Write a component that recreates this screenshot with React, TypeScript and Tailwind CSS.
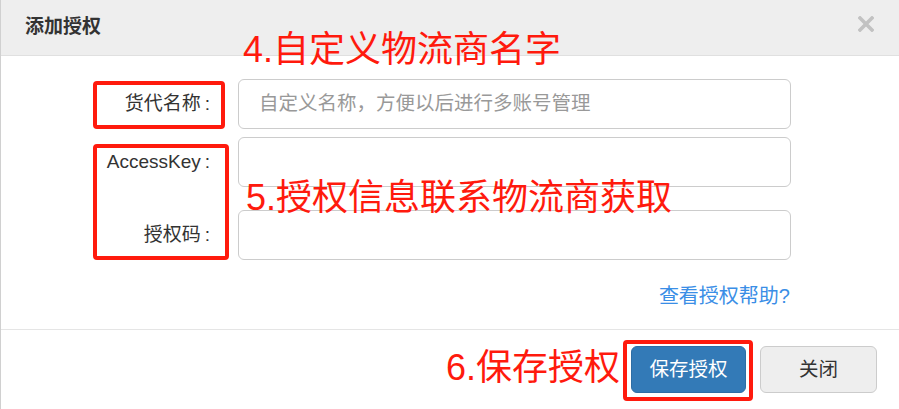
import React from 'react'

const font = { fontFamily: '"Liberation Sans", "Noto Sans CJK SC", sans-serif' }

const Field = ({ label, placeholder, className }: { label: string; placeholder?: string; className?: string }) => (
    <div className={`flex items-center ${className ?? ''}`}>
        <label className="w-[209px] text-right text-[19px] text-[#333]">
            {label}
            <span className="ml-[4px]">:</span>
        </label>
        <div className="ml-[28px] w-[553px] h-[50px] border border-[#cccccc] rounded-[6px] flex items-center px-[20px]">
            <span className="text-[19.5px] text-[#999]">{placeholder}</span>
        </div>
    </div>
)

const App = () => {
    return (
        <div className="relative w-[899px] h-[409px] bg-white overflow-hidden border-l border-[#d0d0d0]" style={font}>
            {/* header */}
            <div className="h-[56px] bg-[#eeeeee] border-b border-[#e0e0e0] flex items-center justify-between pl-[24px] pr-[25px]">
                <h4 className="text-[19px] font-bold text-[#333]">添加授权</h4>
                <svg width="16" height="16" viewBox="0 0 16 16" className="-mt-[8px]">
                    <path d="M2 2L14 14M14 2L2 14" stroke="#c2c2c2" strokeWidth="3.6" strokeLinecap="square" />
                </svg>
            </div>

            {/* body */}
            <div className="pt-[23px] h-[273px]">
                <Field label="货代名称" placeholder="自定义名称，方便以后进行多账号管理" />
                <Field label="AccessKey" className="mt-[8px]" />
                <Field label="授权码" className="mt-[23px]" />
                <div className="flex justify-end pr-[109px] mt-[21px]">
                    <a className="text-[20px] text-[#3a8ee6] cursor-pointer">查看授权帮助?</a>
                </div>
            </div>

            {/* footer */}
            <div className="border-t border-[#e5e5e5] flex justify-end items-center gap-[14px] pr-[22px] pt-[16px]">
                <button className="w-[115px] h-[47px] rounded-[6px] bg-[#337ab7] border border-[#2e6da4] text-white text-[19.5px]">保存授权</button>
                <button className="w-[117px] h-[47px] rounded-[6px] bg-[#eeeeee] border border-[#cccccc] text-[#333] text-[19.5px]">关闭</button>
            </div>

            {/* annotations */}
            <div className="absolute left-[92px] top-[81px] w-[132px] h-[48px] border-[4px] border-[#ff1a0d] rounded-[4px]" />
            <div className="absolute left-[92px] top-[144px] w-[136px] h-[116px] border-[4px] border-[#ff1a0d] rounded-[4px]" />
            <div className="absolute left-[622px] top-[340px] w-[130px] h-[61px] border-[4px] border-[#ff1a0d] rounded-[4px]" />
            <div className="absolute left-[242px] top-[32px] text-[36px] leading-none text-[#ff1a0d]">4.自定义物流商名字</div>
            <div className="absolute left-[245px] top-[180px] text-[36px] leading-none text-[#ff1a0d]">5.授权信息联系物流商获取</div>
            <div className="absolute left-[445px] top-[350px] text-[36px] leading-none text-[#ff1a0d]">6.保存授权</div>
        </div>
    )
}

export default App
